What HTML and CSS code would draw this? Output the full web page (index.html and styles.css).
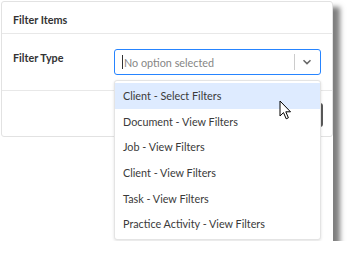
FILE: index.html
```html
<!DOCTYPE html>
<html>
<head>
<meta charset="utf-8">
<link rel="stylesheet" href="styles.css">
</head>
<body>
<div class="canvas">
  <div class="dialog">
    <div class="header">Filter Items</div>
    <div class="body">
      <div class="label">Filter Type</div>
      <div class="select">
        <span class="caret"></span>
        <span class="placeholder">No option selected</span>
        <span class="sep"></span>
        <svg class="chev" width="10" height="6" viewBox="0 0 10 6"><path d="M1.5 1.2 L5 4.6 L8.5 1.2" fill="none" stroke="#666" stroke-width="1.5"/></svg>
      </div>
    </div>
    <div class="footer"><div class="btn"></div></div>
  </div>
  <div class="menu">
    <div class="item active">Client - Select Filters</div>
    <div class="item">Document - View Filters</div>
    <div class="item">Job - View Filters</div>
    <div class="item">Client - View Filters</div>
    <div class="item">Task - View Filters</div>
    <div class="item">Practice Activity - View Filters</div>
  </div>
  <svg class="cursor" width="13" height="21" viewBox="0 0 13 21"><path d="M1 1 L1 16 L4.5 12.6 L7.2 18.8 L9.4 17.8 L6.8 11.8 L11.5 11.8 Z" fill="#fff" stroke="#000" stroke-width="1" stroke-linejoin="round"/></svg>
</div>
</body>
</html>
```
FILE: styles.css
```css
html, body { margin: 0; padding: 0; background: #fff; }
body { font-family: Lato, "Open Sans", "Liberation Sans", sans-serif; font-size: 10.8px; color: #333; }
.canvas {
  position: relative;
  width: 333px;
  height: 241px;
  background: #fff;
  box-shadow: 7px 7px 5px rgba(0,0,0,0.5);
  padding-top: 1px;
  box-sizing: border-box;
}
.dialog {
  margin-left: 1px;
  width: 332px;
  height: 136px;
  box-sizing: border-box;
  border: 1px solid #e2e2e2;
  border-radius: 3px;
  display: flex;
  flex-direction: column;
}
.header {
  height: 32px;
  box-sizing: border-box;
  border-bottom: 1px solid #e8e8e8;
  padding: 0 0 0 11px;
  display: flex;
  align-items: center;
  font-weight: 700;
  padding-top: 3px;
}
.body {
  display: flex;
  padding: 15px 11px 0 11px;
  height: 57px;
  box-sizing: border-box;
  border-bottom: 1px solid #e8e8e8;
}
.label { width: 101px; font-weight: 700; padding-top: 2px; }
.select {
  width: 207px;
  height: 26px;
  box-sizing: border-box;
  border: 1px solid #2684ff;
  border-radius: 3px;
  display: flex;
  align-items: center;
  padding-left: 7px;
}
.caret { width: 1px; height: 14px; background: #333; margin-right: 1px; }
.placeholder { color: #858585; flex: 1; }
.sep { width: 1px; height: 16px; background: #ccc; }
.chev { margin: 0 8px 0 7px; }
.footer { flex: 1; display: flex; justify-content: flex-end; align-items: center; padding-right: 9px; }
.btn { width: 60px; height: 24px; background: #5a5a5a; border-radius: 3px; margin-top: 2px; }
.menu {
  position: absolute;
  left: 114px;
  top: 80px;
  width: 207px;
  height: 160px;
  box-sizing: border-box;
  background: #fff;
  border: 1px solid #e4e4e4;
  border-radius: 3px;
  box-shadow: 0 1px 3px rgba(0,0,0,0.12);
  padding-top: 2px;
}
.item {
  height: 25.6px;
  display: flex;
  align-items: center;
  padding-left: 8px;
  color: #3a3a3a;
}
.item.active { background: #deebff; }
.cursor { position: absolute; left: 279px; top: 100px; }
```
